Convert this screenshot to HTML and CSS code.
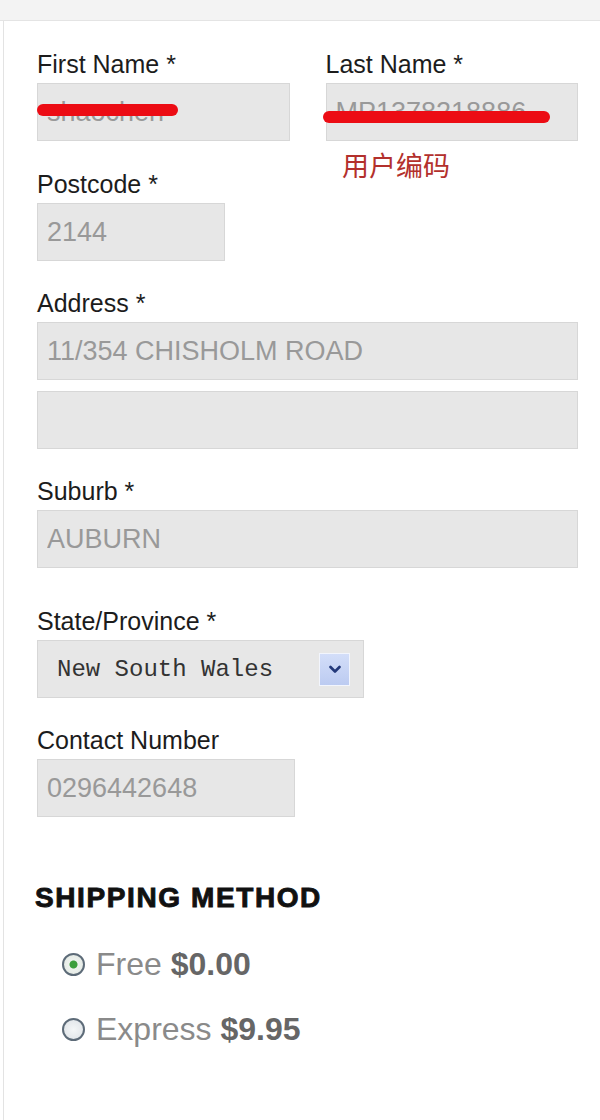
FILE: index.html
```html
<!DOCTYPE html>
<html lang="en">
<head>
    <meta charset="UTF-8" />
    <title>Delivery Details</title>
    <link rel="stylesheet" href="styles.css">
</head>
<body>
<div class="page">
    <div class="topbar"></div>
    <div class="panel">
        <div class="row">
            <div class="field">
                <label>First Name *</label>
                <input type="text" value="shaochen" readonly />
            </div>
            <div class="field">
                <label>Last Name *</label>
                <input type="text" value="MP1378218886" readonly />
            </div>
            <!-- annotations drawn on top of the form -->
            <span class="strike strike-first"></span>
            <span class="strike strike-last"></span>
            <span class="note">用户编码</span>
        </div>

        <div class="field gap-postcode">
            <label>Postcode *</label>
            <input type="text" class="w-short" value="2144" readonly />
        </div>

        <div class="field">
            <label>Address *</label>
            <input type="text" value="11/354 CHISHOLM ROAD" readonly />
            <input type="text" class="second" value="" readonly />
        </div>

        <div class="field">
            <label>Suburb *</label>
            <input type="text" value="AUBURN" readonly />
        </div>

        <div class="field gap-state">
            <label>State/Province *</label>
            <div class="select">
                <span>New South Wales</span>
                <span class="select-btn">
                    <svg width="12" height="9" viewBox="0 0 12 9"><path d="M1.5 2 L6 6.5 L10.5 2" fill="none" stroke="#23397a" stroke-width="2.6" stroke-linecap="round" stroke-linejoin="round"/></svg>
                </span>
            </div>
        </div>

        <div class="field">
            <label>Contact Number</label>
            <input type="text" class="w-phone" value="0296442648" readonly />
        </div>

        <h2>SHIPPING METHOD</h2>
        <ul class="shipping">
            <li><span class="radio checked"></span><span class="opt">Free <b>$0.00</b></span></li>
            <li><span class="radio"></span><span class="opt">Express <b>$9.95</b></span></li>
        </ul>
    </div>
</div>
</body>
</html>
```

FILE: styles.css
```css
html,body{margin:0;padding:0;background:#fff;}
body{font-family:"Liberation Sans",Arial,sans-serif;color:#1c1c1c;}
.page{min-height:100vh;display:flex;flex-direction:column;}
.topbar{height:20px;background:#f3f3f3;border-bottom:1px solid #e4e4e4;}
.panel{flex:1;margin-left:3px;border-left:1px solid #e3e3e3;padding:28px 22px 0 33px;}

.row{position:relative;display:grid;grid-template-columns:1fr 1fr;column-gap:36px;}
.field{display:flex;flex-direction:column;align-items:flex-start;margin-top:27px;}
.row .field{margin-top:0;}
.field.gap-postcode{margin-top:28px;}
.field.gap-state{margin-top:38px;}
.field label{font-size:25px;line-height:30px;margin-bottom:4px;color:#1c1c1c;}
.field input{box-sizing:border-box;width:100%;height:58px;margin:0;padding:0 9px;background:#e7e7e7;border:1px solid #d7d7d7;font-family:"Liberation Sans",Arial,sans-serif;font-size:27px;color:#999;outline:none;}
.field input.second{margin-top:11px;}
.field input.w-short{width:188px;}
.field input.w-phone{width:258px;}

.strike{position:absolute;height:12px;border-radius:6px;background:#ec0c14;}
.strike-first{left:0;top:55px;width:141px;}
.strike-last{left:286px;top:62px;width:227px;}
.note{position:absolute;left:305px;top:102px;font-family:"Noto Sans CJK SC",sans-serif;font-size:27px;line-height:27px;color:#b3302c;}

.select{box-sizing:border-box;width:327px;height:58px;display:flex;align-items:center;justify-content:space-between;padding:0 13px 0 19px;background:#e7e7e7;border:1px solid #d7d7d7;font-family:"Liberation Mono","Courier New",monospace;font-size:24px;color:#333;}
.select-btn{box-sizing:border-box;width:31px;height:33px;display:flex;align-items:center;justify-content:center;background:linear-gradient(#d3def9,#bccbf1);border:1px solid #f2f5fd;}

h2{margin:63px 0 0 -2px;font-size:28px;line-height:36px;font-weight:900;letter-spacing:1.6px;color:#111;-webkit-text-stroke:0.9px #111;}
.shipping{list-style:none;margin:30px 0 0 25px;padding:0;}
.shipping li{display:flex;align-items:center;gap:11px;height:36px;margin-bottom:29px;}
.radio{box-sizing:border-box;width:23px;height:23px;border-radius:50%;border:2px solid #5d6b78;background:radial-gradient(circle,#f4f6f7 0,#dde2e6 100%);}
.radio.checked{background:radial-gradient(circle,#3d9f3d 0,#3d9f3d 3.5px,#eef2ee 4.5px,#dfe6e0 100%);}
.opt{font-size:32px;line-height:36px;color:#8a8a8a;}
.opt b{color:#666;}
```
